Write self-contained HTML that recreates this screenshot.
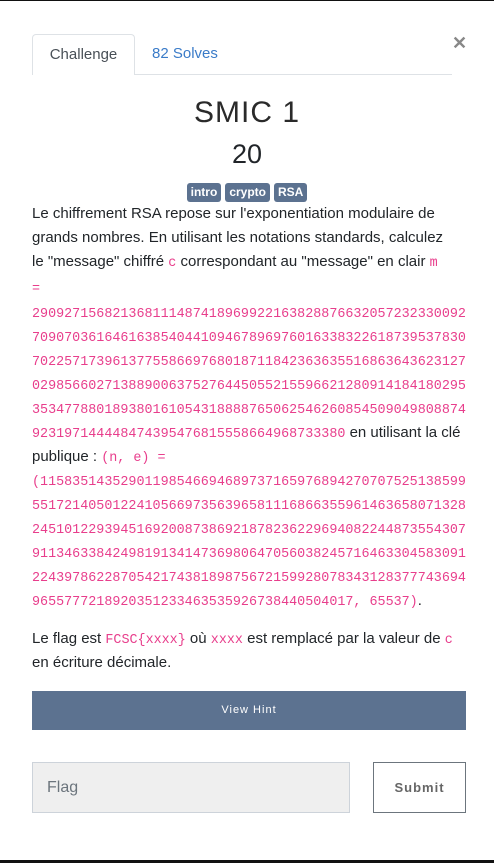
<!DOCTYPE html>
<html><head><meta charset="utf-8"><style>
*{margin:0;padding:0;box-sizing:border-box}
body{width:494px;height:863px;background:#111;font-family:"Liberation Sans",sans-serif;color:#212529;overflow:hidden;position:relative}
.modal{position:absolute;left:0;top:1px;width:494px;height:859px;background:#fff}
.abs{position:absolute}
.tab{left:32px;top:33px;width:103px;height:41px;border:1px solid #dee2e6;border-bottom:none;border-radius:4px 4px 0 0;background:#fff;font-size:15px;color:#495057;text-align:center;line-height:40px}
.line{left:32px;top:73px;width:420px;height:1px;background:#dee2e6}
.solves{left:152px;top:33px;line-height:40px;font-size:15px;color:#3a7bc8}
.x{left:452px;top:32px;font-size:18px;color:#888;font-weight:bold}
.title{left:0;width:494px;text-align:center;top:92px;font-size:30px;font-weight:300;color:#2a2a2a;letter-spacing:1px;line-height:40px}
.pts{left:0;width:494px;text-align:center;top:135px;font-size:27px;line-height:36px}
.badges{left:0;width:494px;text-align:center;top:182px;font-size:0}
.b{display:inline-block;background:#5c7290;color:#fff;font-size:12px;font-weight:bold;padding:0 4px;height:19px;line-height:19px;border-radius:3px;margin:0 2px}
.t{position:absolute;left:32px;height:24px;line-height:24px;font-size:15px;white-space:nowrap}
.m{font-family:"Liberation Mono",monospace;color:#e83e8c;font-size:13.4px}
.hint{left:32px;top:690px;width:434px;height:39px;background:#5c7290;color:#fff;font-size:11px;letter-spacing:1px;text-align:center;line-height:39px}
.flag{left:32px;top:761px;width:318px;height:51px;background:#efefef;border:1px solid #cdd3da;font-size:16px;color:#6c757d;padding-left:14px;line-height:49px}
.sub{left:373px;top:761px;width:93px;height:51px;border:1px solid #6c757d;font-size:13px;font-weight:bold;color:#666;letter-spacing:1px;text-align:center;line-height:49px}
</style></head><body>
<div class="modal">
<div class="abs line"></div>
<div class="abs tab">Challenge</div>
<div class="abs solves">82 Solves</div>
<div class="abs x">✕</div>
<div class="abs title">SMIC 1</div>
<div class="abs pts">20</div>
<div class="abs badges"><span class="b">intro</span><span class="b">crypto</span><span class="b">RSA</span></div>
<div class="t" style="top:201px">Le chiffrement RSA repose sur l'exponentiation modulaire de</div>
<div class="t" style="top:225px">grands nombres. En utilisant les notations standards, calculez</div>
<div class="t" style="top:249px">le "message" chiffré <span class="m">c</span> correspondant au "message" en clair <span class="m">m</span></div>
<div class="t" style="top:275px"><span class="m">=</span></div>
<div class="t" style="top:300px"><span class="m">290927156821368111487418969922163828876632057232330092</span></div>
<div class="t" style="top:324px"><span class="m">709070361646163854044109467896976016338322618739537830</span></div>
<div class="t" style="top:348px"><span class="m">702257173961377558669768018711842363635516863643623127</span></div>
<div class="t" style="top:372px"><span class="m">029856602713889006375276445055215596621280914184180295</span></div>
<div class="t" style="top:396px"><span class="m">353477880189380161054318888765062546260854509049808874</span></div>
<div class="t" style="top:420px"><span class="m">923197144448474395476815558664968733380</span> en utilisant la clé</div>
<div class="t" style="top:444px">publique : <span class="m">(n, e) =</span></div>
<div class="t" style="top:468px"><span class="m">(11583514352901198546694689737165976894270707525138599</span></div>
<div class="t" style="top:492px"><span class="m">551721405012241056697356396581116866355961463658071328</span></div>
<div class="t" style="top:516px"><span class="m">245101229394516920087386921878236229694082244873554307</span></div>
<div class="t" style="top:540px"><span class="m">911346338424981913414736980647056038245716463304583091</span></div>
<div class="t" style="top:564px"><span class="m">224397862287054217438189875672159928078343128377743694</span></div>
<div class="t" style="top:588px"><span class="m">9655777218920351233463535926738440504017, 65537)</span>.</div>
<div class="t" style="top:626px">Le flag est <span class="m">FCSC{xxxx}</span> où <span class="m">xxxx</span> est remplacé par la valeur de <span class="m">c</span></div>
<div class="t" style="top:650px">en écriture décimale.</div>
<div class="abs hint">View Hint</div>
<div class="abs flag">Flag</div>
<div class="abs sub">Submit</div>
</div>
</body></html>
